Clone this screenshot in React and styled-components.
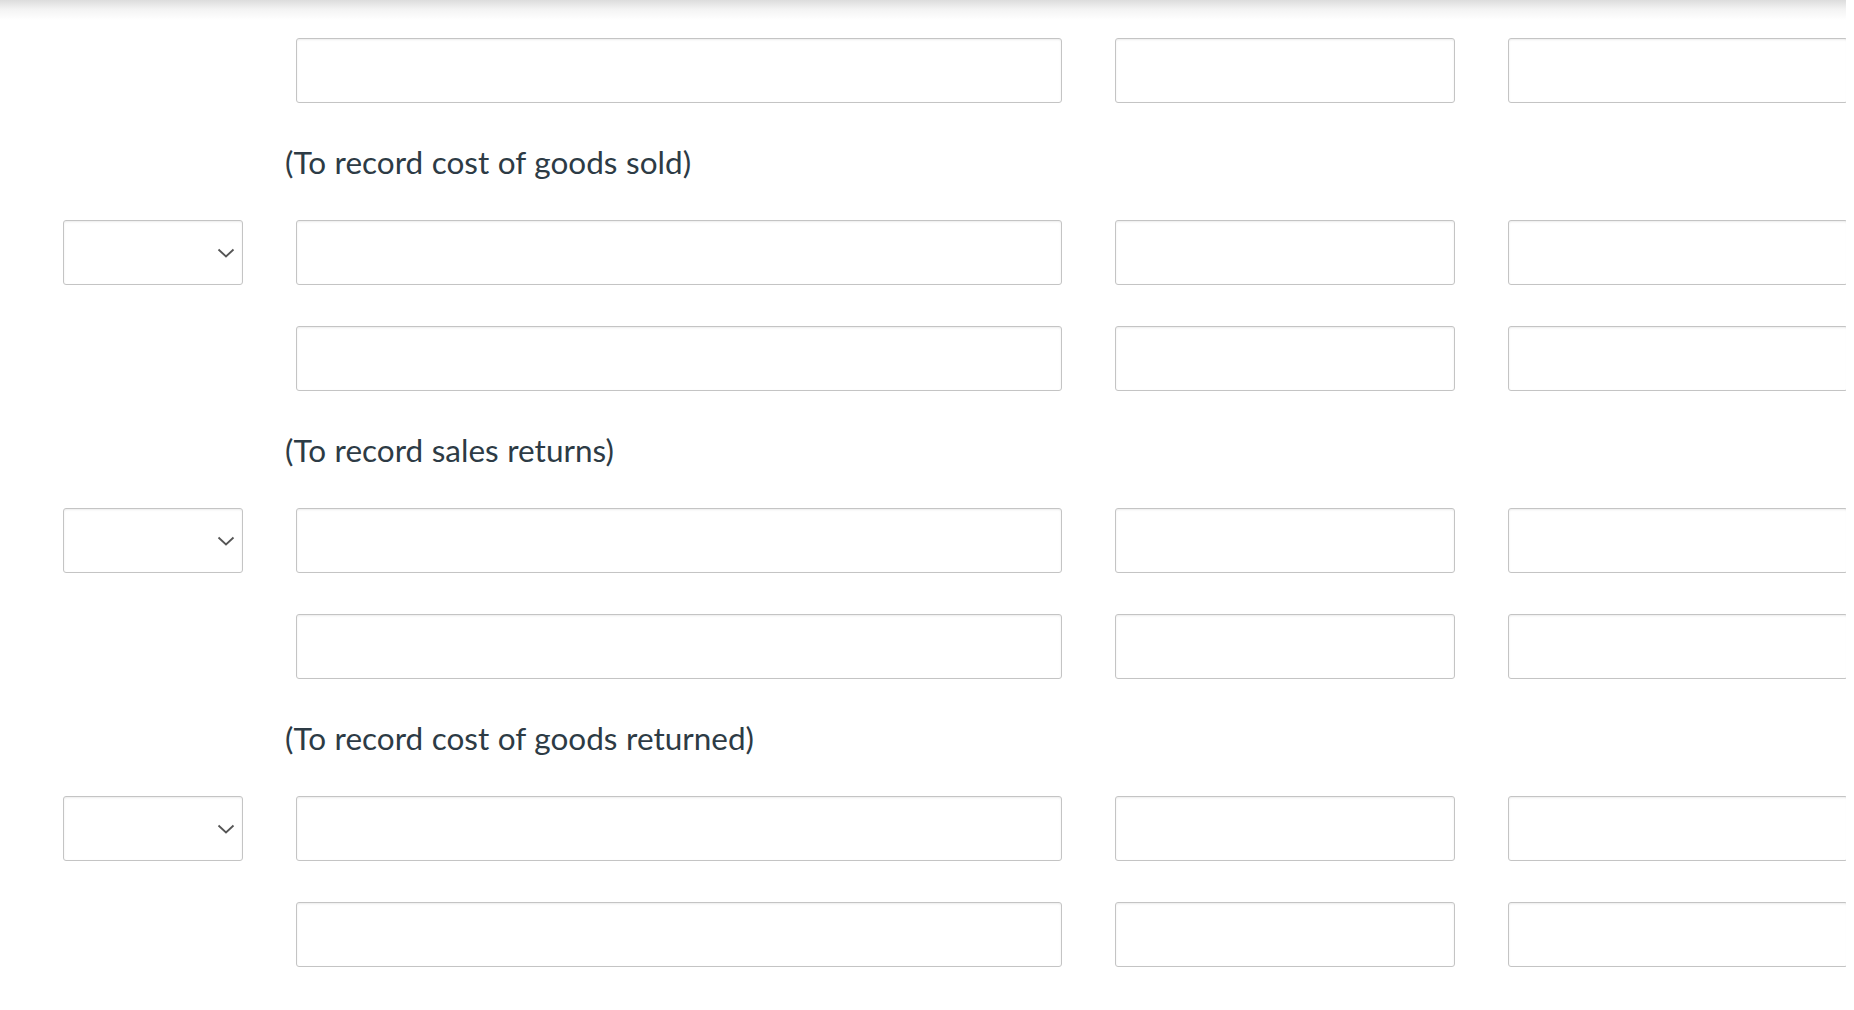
import React from 'react'
import styled, { createGlobalStyle } from 'styled-components'

const GlobalStyle = createGlobalStyle`
  html, body {
    margin: 0;
    padding: 0;
    background: #fff;
    font-family: Lato, "Open Sans", "Liberation Sans", sans-serif;
    overflow: hidden;
  }
`

const Page = styled.div`
  width: 1846px;
  height: 1010px;
  overflow: hidden;
  position: relative;
`

const Shade = styled.div`
  height: 20px;
  background: linear-gradient(to bottom, #dcdcdc 0%, #f3f3f3 45%, #ffffff 100%);
`

const Journal = styled.div`
  padding: 18px 0 0 63px;
  display: flex;
  flex-direction: column;
`

const Section = styled.div`
  display: flex;
  flex-direction: column;
  gap: 41px;
`

const Row = styled.div`
  display: grid;
  grid-template-columns: 180px 766px 340px 340px;
  column-gap: 53px;
  height: 65px;
`

const Field = styled.div`
  box-sizing: border-box;
  height: 65px;
  border: 1px solid #c4c4c4;
  border-radius: 3px;
  background: #fff;
  box-shadow: inset 0 1px 2px rgba(0, 0, 0, 0.08);
`

const Select = styled(Field)`
  display: flex;
  align-items: center;
  justify-content: flex-end;
  padding-right: 7px;
`

const Caption = styled.div`
  height: 117px;
  display: flex;
  align-items: center;
  padding-left: 222px;
  font-size: 31.5px;
  color: #2d3b45;
  word-spacing: 0.5px;
`

const Chevron = () => (
  <svg width="18" height="10" viewBox="0 0 18 10">
    <polyline points="1.5,1.5 9,8.5 16.5,1.5" fill="none" stroke="#555" strokeWidth="1.8" />
  </svg>
)

const sections = [
  { rows: [false], caption: '(To record cost of goods sold)' },
  { rows: [true, false], caption: '(To record sales returns)' },
  { rows: [true, false], caption: '(To record cost of goods returned)' },
  { rows: [true, false], caption: null },
]

const App = () => {
  return (
    <Page>
      <GlobalStyle />
      <Shade />
      <Journal>
        {sections.map((s, i) => (
          <React.Fragment key={i}>
            <Section>
              {s.rows.map((hasSelect, j) => (
                <Row key={j}>
                  {hasSelect ? (
                    <Select>
                      <Chevron />
                    </Select>
                  ) : (
                    <div />
                  )}
                  <Field />
                  <Field />
                  <Field />
                </Row>
              ))}
            </Section>
            {s.caption && <Caption>{s.caption}</Caption>}
          </React.Fragment>
        ))}
      </Journal>
    </Page>
  )
}

export default App
